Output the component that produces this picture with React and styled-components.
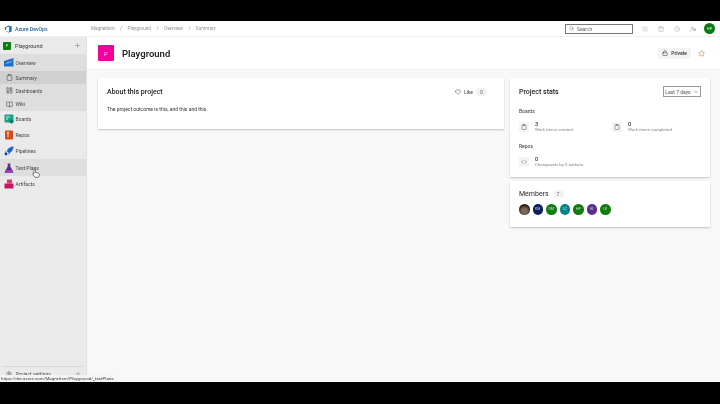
import React from 'react'
import styled, { createGlobalStyle } from 'styled-components'
import { Plus, Search, Lock, Star, Heart, ChevronDown, Settings, ChevronsLeft, List, ShoppingBag, Clock, UserCog, Clipboard, LayoutDashboard, BookOpen, Code } from 'lucide-react'

const GlobalStyle = createGlobalStyle`
  html, body { margin: 0; padding: 0; background: #000; }
  body { font-family: Roboto, "Liberation Sans", sans-serif; color: #222; }
`

const navItems = [
  { label: 'Boards', color: '#1a9f8c', kind: 'boards' },
  { label: 'Repos', color: '#d9481c', kind: 'repos' },
  { label: 'Pipelines', color: '#1f5fd0', kind: 'pipelines' },
  { label: 'Test Plans', color: '#5c2d91', kind: 'test', hover: true },
  { label: 'Artifacts', color: '#c8175f', kind: 'artifacts' },
]

const members = [
  { initials: '', bg: 'radial-gradient(circle at 50% 65%, #7d6656 0 30%, #2a211a 65%)' },
  { initials: 'KM', bg: '#0b1e5b' },
  { initials: 'DM', bg: '#107c10' },
  { initials: 'SC', bg: '#038387' },
  { initials: 'HP', bg: '#107c10' },
  { initials: 'RI', bg: '#5c2d91' },
  { initials: 'LK', bg: '#107c10' },
]

const ServiceIcon = ({ kind, color }) => {
  if (kind === 'boards') return (
    <svg width="10" height="10" viewBox="0 0 10 10"><rect x="0.5" y="0.5" width="9" height="8" rx="1" fill={color} /><path d="M2 3h4M2 5h2" stroke="#bff0e6" /><circle cx="7.5" cy="7.5" r="2" fill="#0e7a6b" /></svg>
  )
  if (kind === 'repos') return (
    <svg width="10" height="10" viewBox="0 0 10 10"><rect x="1" y="0.5" width="8" height="9" rx="1" fill={color} /><circle cx="4" cy="3" r="1.2" fill="#ffc9a8" /><path d="M4 3v4.5" stroke="#ffc9a8" /></svg>
  )
  if (kind === 'pipelines') return (
    <svg width="10" height="10" viewBox="0 0 10 10"><path d="M9.5 0.5 C6 0.5 4 2.5 2.8 5 L5 7.2 C7.5 6 9.5 4 9.5 0.5Z" fill={color} /><path d="M0.5 5.5h2l-1 2zM4.5 9.5v-2l2-1z" fill="#3a8be8" /><circle cx="2" cy="8" r="1.4" fill="#0f3fa0" /></svg>
  )
  if (kind === 'test') return (
    <svg width="10" height="10" viewBox="0 0 10 10"><path d="M3.7 0.5h2.6v3l3 5.5a0.6 0.6 0 0 1 -0.5 0.8H1.2a0.6 0.6 0 0 1 -0.5 -0.8l3-5.5z" fill={color} /><path d="M2.3 7.5h5.4l0.8 1.6H1.5z" fill="#c239b3" /></svg>
  )
  return (
    <svg width="10" height="10" viewBox="0 0 10 10"><rect x="0.5" y="4.5" width="9" height="5" fill={color} /><rect x="3" y="0.5" width="5" height="4" fill="#e8336d" /></svg>
  )
}

const App = () => (
  <Screen>
    <GlobalStyle />
    <TopBlack />
    <Frame>
      <Header>
        <Brand>
          <svg width="8" height="8" viewBox="0 0 10 10"><path d="M1 3 L6 0.5 L9.5 2 V8 L6 9.5 L1.5 8 L6.5 8.4 V2 L2.5 3.5 V6.5 L1 6z" fill="#0f6cbd" /></svg>
          <BrandName>Azure DevOps</BrandName>
        </Brand>
        <Crumbs>
          <span>Magnetism</span><i>/</i><span>Playground</span><i>/</i><span>Overview</span><i>/</i><span>Summary</span>
        </Crumbs>
        <SearchBox><Search size={5} strokeWidth={2} /><span>Search</span></SearchBox>
        <HeaderIcons>
          <List size={6} /><ShoppingBag size={6} /><Clock size={6} /><UserCog size={6} />
        </HeaderIcons>
        <UserBadge>HP</UserBadge>
      </Header>
      <Body>
        <Sidebar>
          <ProjectRow>
            <ProjectSquare>P</ProjectSquare>
            <ProjectName>Playground</ProjectName>
            <Plus size={7} color="#8a8a8a" />
          </ProjectRow>
          <OverviewGroup>
            <NavRow>
              <IconSlot><svg width="10" height="9" viewBox="0 0 10 9"><path d="M0 3 L9.5 0 V8.5 H0z" fill="#1f6fc8" /><path d="M2 6l2-2 1.5 1 2.5-2.5" stroke="#cfe6fb" strokeWidth="0.7" fill="none" /></svg></IconSlot>
              <NavLabel>Overview</NavLabel>
            </NavRow>
            <NavRow $active $tall>
              <IconSlot><Clipboard size={7} color="#555" /></IconSlot>
              <NavLabel>Summary</NavLabel>
            </NavRow>
            <NavRow $tall>
              <IconSlot><LayoutDashboard size={7} color="#555" /></IconSlot>
              <NavLabel>Dashboards</NavLabel>
            </NavRow>
            <NavRow $tall>
              <IconSlot><BookOpen size={7} color="#555" /></IconSlot>
              <NavLabel>Wiki</NavLabel>
            </NavRow>
          </OverviewGroup>
          {navItems.map((item) => (
            <ServiceRow key={item.label} $hover={item.hover}>
              <IconSlot><ServiceIcon kind={item.kind} color={item.color} /></IconSlot>
              <NavLabel>{item.label}</NavLabel>
              {item.hover && (
                <Cursor width="8" height="10" viewBox="0 0 8 10">
                  <path d="M2.6 0.8c.5 0 .8.3.8.8v2.6l2.8.8c.6.2 1 .7 1 1.3v1.4l-.8 1.6H3L.8 6.2c-.3-.5.3-1 .8-.7l.3.2V1.6c0-.5.3-.8.7-.8z" fill="#fff" stroke="#222" strokeWidth="0.6" />
                </Cursor>
              )}
            </ServiceRow>
          ))}
          <SidebarFooter>
            <Settings size={6} color="#555" />
            <FooterLabel>Project settings</FooterLabel>
            <ChevronsLeft size={6} color="#555" />
          </SidebarFooter>
        </Sidebar>
        <Main>
          <TitleBand>
            <BigSquare>P</BigSquare>
            <PageTitle>Playground</PageTitle>
            <PrivateTag><Lock size={6} /><span>Private</span></PrivateTag>
            <Star size={7} color="#b98a2e" />
          </TitleBand>
          <Columns>
            <AboutCard>
              <CardTop>
                <CardTitle>About this project</CardTitle>
                <LikeBox><Heart size={6} /><span>Like</span><LikeCount>0</LikeCount></LikeBox>
              </CardTop>
              <BodyText>The project outcome is this, and this and this</BodyText>
            </AboutCard>
            <SideColumn>
              <StatsCard>
                <CardTop>
                  <CardTitle>Project stats</CardTitle>
                  <RangeSelect>Last 7 days<ChevronDown size={6} /></RangeSelect>
                </CardTop>
                <SectionLabel>Boards</SectionLabel>
                <StatGrid>
                  <Stat icon={<Clipboard size={6} />} value="3" caption="Work items created" />
                  <Stat icon={<Clipboard size={6} />} value="0" caption="Work items completed" />
                </StatGrid>
                <SectionLabel $gap>Repos</SectionLabel>
                <StatGrid>
                  <Stat icon={<Code size={6} />} value="0" caption="Changesets by 0 authors" />
                </StatGrid>
              </StatsCard>
              <MembersCard>
                <MembersHead>
                  <MembersTitle>Members</MembersTitle>
                  <CountPill>7</CountPill>
                </MembersHead>
                <AvatarRow>
                  {members.map((m, i) => <Avatar key={i} $bg={m.bg}>{m.initials}</Avatar>)}
                </AvatarRow>
              </MembersCard>
            </SideColumn>
          </Columns>
        </Main>
      </Body>
      <StatusUrl>https://dev.azure.com/Magnetism/Playground/_testPlans</StatusUrl>
    </Frame>
    <BottomBlack />
  </Screen>
)

const Stat = ({ icon, value, caption }) => (
  <StatItem>
    <StatIcon>{icon}</StatIcon>
    <div>
      <StatValue>{value}</StatValue>
      <StatCaption>{caption}</StatCaption>
    </div>
  </StatItem>
)

export default App

const Screen = styled.div`
  width: 720px;
  height: 404px;
  display: flex;
  flex-direction: column;
  overflow: hidden;
  background: #000;
`
const TopBlack = styled.div`
  height: 21px;
  flex: none;
`
const BottomBlack = styled.div`
  height: 22px;
  flex: none;
`
/* the reference is an upscaled video frame, so everything is slightly soft */
const Frame = styled.div`
  position: relative;
  height: 361px;
  display: flex;
  flex-direction: column;
  background: #f8f8f8;
  filter: blur(0.3px);
`
const Header = styled.header`
  height: 16px;
  flex: none;
  display: flex;
  align-items: center;
  background: #fff;
  padding: 0 5px 0 4px;
  border-bottom: 1px solid #f0f0f0;
  box-sizing: border-box;
`
const Brand = styled.div`
  width: 87px;
  display: flex;
  align-items: center;
  gap: 3px;
  flex: none;
`
const BrandName = styled.span`
  font-size: 5.2px;
  font-weight: 500;
  color: #1f5f94;
`
const Crumbs = styled.nav`
  display: flex;
  gap: 5.5px;
  font-size: 4.7px;
  color: #8f8f8f;
  i { font-style: normal; }
`
const SearchBox = styled.div`
  margin-left: auto;
  width: 68px;
  height: 10px;
  box-sizing: border-box;
  border: 1px solid #777;
  display: flex;
  align-items: center;
  gap: 3px;
  padding-left: 3px;
  font-size: 5px;
  color: #666;
`
const HeaderIcons = styled.div`
  display: flex;
  gap: 10px;
  margin-left: 9px;
  color: #aaa;
`
const UserBadge = styled.div`
  width: 11px;
  height: 11px;
  border-radius: 50%;
  background: #0b7a12;
  color: #dff5df;
  font-size: 4px;
  display: flex;
  align-items: center;
  justify-content: center;
  margin-left: 8px;
`
const Body = styled.div`
  flex: 1;
  display: flex;
  min-height: 0;
`
const Sidebar = styled.aside`
  width: 87px;
  flex: none;
  display: flex;
  flex-direction: column;
  background: #eaeaea;
  border-right: 1px solid #e0e0e0;
  box-sizing: border-box;
`
const ProjectRow = styled.div`
  height: 17px;
  display: flex;
  align-items: center;
  padding: 0 5px 0 3px;
  flex: none;
`
const ProjectSquare = styled.div`
  width: 8px;
  height: 8px;
  background: #107c10;
  color: #cfe;
  font-size: 4px;
  display: flex;
  align-items: center;
  justify-content: center;
  border-radius: 1px;
`
const ProjectName = styled.span`
  font-size: 5.5px;
  color: #333;
  margin-left: 4px;
  flex: 1;
`
const OverviewGroup = styled.div`
  background: #dedede;
  display: flex;
  flex-direction: column;
`
const NavRow = styled.div`
  height: ${(p) => (p.$tall ? '13.3px' : '17px')};
  display: flex;
  align-items: center;
  padding-left: 3px;
  background: ${(p) => (p.$active ? '#d0d0d0' : 'transparent')};
`
const ServiceRow = styled.div`
  position: relative;
  height: 16.2px;
  display: flex;
  align-items: center;
  padding-left: 3px;
  background: ${(p) => (p.$hover ? '#dedede' : 'transparent')};
`
const IconSlot = styled.span`
  width: 12px;
  display: flex;
  align-items: center;
  justify-content: center;
  flex: none;
`
const NavLabel = styled.span`
  font-size: 5px;
  color: #444;
  margin-left: 0.5px;
`
const Cursor = styled.svg`
  position: absolute;
  left: 32px;
  top: 9px;
`
const SidebarFooter = styled.div`
  margin: auto 3px 0;
  height: 16px;
  border-top: 1px solid #d6d6d6;
  display: flex;
  align-items: flex-start;
  padding: 4px 2px 0 3px;
  gap: 4px;
  box-sizing: border-box;
`
const FooterLabel = styled.span`
  font-size: 5px;
  color: #555;
  flex: 1;
`
const Main = styled.main`
  flex: 1;
  display: flex;
  flex-direction: column;
  min-width: 0;
`
const TitleBand = styled.div`
  height: 33px;
  flex: none;
  box-sizing: border-box;
  background: #fff;
  border-bottom: 1px solid #f0f0f0;
  display: flex;
  align-items: center;
  padding: 0 15px 0 11px;
`
const BigSquare = styled.div`
  width: 16px;
  height: 16px;
  background: #f2009c;
  color: #ffc4ea;
  font-size: 6px;
  display: flex;
  align-items: center;
  justify-content: center;
  border-radius: 1px;
`
const PageTitle = styled.h1`
  margin: 0 auto 0 8px;
  font-size: 9.5px;
  font-weight: 600;
  color: #222;
`
const PrivateTag = styled.div`
  display: flex;
  align-items: center;
  gap: 3px;
  height: 11px;
  padding: 0 4px;
  margin-right: 7px;
  background: #f4f4f4;
  font-size: 5px;
  font-weight: 500;
  color: #333;
`
const Columns = styled.div`
  display: flex;
  align-items: flex-start;
  gap: 6px;
  padding: 8px 10px 0 11px;
`
const Card = styled.section`
  background: #fff;
  box-shadow: 0 1px 2px rgba(0, 0, 0, 0.22);
  border-radius: 1px;
  box-sizing: border-box;
`
const AboutCard = styled(Card)`
  width: 406px;
  height: 51px;
  padding: 10px 9px 0;
`
const SideColumn = styled.div`
  width: 200px;
  display: flex;
  flex-direction: column;
  gap: 4px;
`
const StatsCard = styled(Card)`
  height: 99px;
  padding: 8px 9px 0;
`
const MembersCard = styled(Card)`
  height: 46px;
  padding: 9px 9px 0;
`
const CardTop = styled.div`
  display: flex;
  align-items: center;
  justify-content: space-between;
`
const CardTitle = styled.h2`
  margin: 0;
  font-size: 7px;
  font-weight: 500;
  color: #222;
`
const LikeBox = styled.div`
  display: flex;
  align-items: center;
  gap: 3px;
  margin-right: 8px;
  font-size: 5px;
  color: #444;
`
const CountPill = styled.span`
  min-width: 9px;
  height: 8px;
  padding: 0 1px;
  margin-left: 2px;
  border-radius: 4px;
  background: #f2f2f2;
  font-size: 4.5px;
  color: #555;
  display: inline-flex;
  align-items: center;
  justify-content: center;
`
const LikeCount = styled(CountPill)`
  margin-left: 0;
`
const BodyText = styled.p`
  margin: 10px 0 0;
  font-size: 5px;
  color: #333;
`
const RangeSelect = styled.div`
  width: 38px;
  height: 11px;
  box-sizing: border-box;
  border: 1px solid #999;
  display: flex;
  align-items: center;
  justify-content: center;
  gap: 2px;
  font-size: 5px;
  color: #555;
`
const SectionLabel = styled.div`
  font-size: 5px;
  color: #333;
  margin-top: ${(p) => (p.$gap ? '10px' : '11px')};
`
const StatGrid = styled.div`
  display: grid;
  grid-template-columns: 93px 1fr;
  margin-top: 7px;
`
const StatItem = styled.div`
  display: flex;
  align-items: center;
  gap: 6px;
`
const StatIcon = styled.span`
  width: 10px;
  height: 10px;
  background: #f4f4f4;
  color: #555;
  display: flex;
  align-items: center;
  justify-content: center;
  flex: none;
`
const StatValue = styled.div`
  font-size: 5.5px;
  font-weight: 500;
  line-height: 6px;
  color: #333;
`
const StatCaption = styled.div`
  font-size: 4.4px;
  line-height: 6px;
  color: #888;
`
const MembersHead = styled.div`
  display: flex;
  align-items: center;
  gap: 2px;
`
const MembersTitle = styled.h2`
  margin: 0;
  font-size: 7px;
  font-weight: 400;
  color: #222;
`
const AvatarRow = styled.div`
  display: flex;
  gap: 3px;
  margin-top: 6px;
`
const Avatar = styled.span`
  width: 10.5px;
  height: 10.5px;
  border-radius: 50%;
  background: ${(p) => p.$bg};
  color: rgba(255, 255, 255, 0.75);
  font-size: 3.5px;
  display: flex;
  align-items: center;
  justify-content: center;
`
const StatusUrl = styled.div`
  position: absolute;
  left: 0;
  bottom: 0;
  height: 7px;
  padding: 0 3px 0 1px;
  background: #f4f4f4;
  font-size: 4.4px;
  line-height: 7px;
  color: #444;
  white-space: nowrap;
`
